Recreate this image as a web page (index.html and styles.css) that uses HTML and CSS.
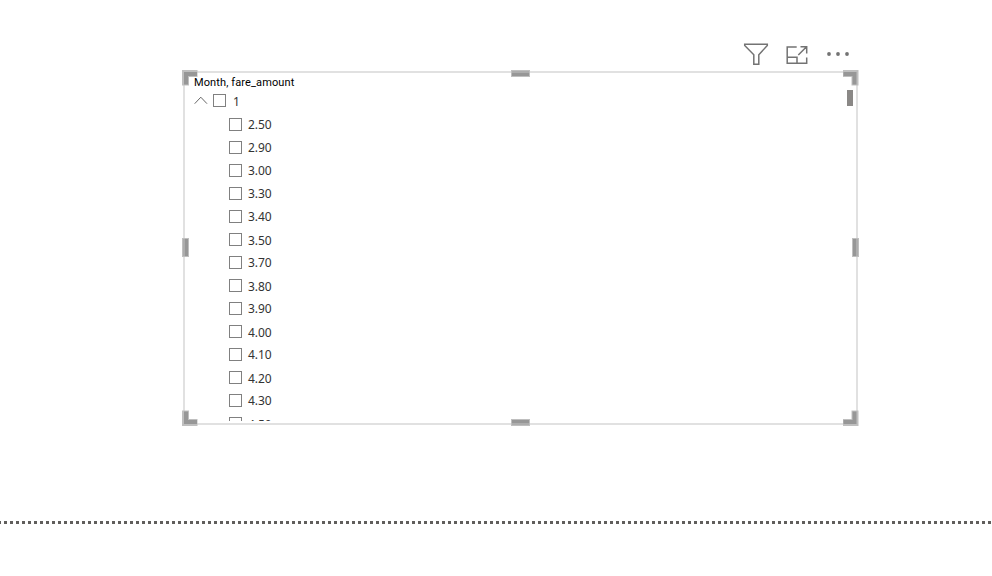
FILE: index.html
```html
<!DOCTYPE html>
<html lang="en">
<head>
<meta charset="utf-8">
<title>Slicer</title>
<link rel="stylesheet" href="styles.css">
</head>
<body>
<div class="toolbar">
  <svg width="26" height="24" viewBox="0 0 26 24"><path d="M1.7 2.2H24.3V3.5L15.8 12.7V22.2H10.8V12.7L1.7 3.5Z"/></svg>
  <svg width="24" height="24" viewBox="0 0 24 24"><path d="M11.7 5H2.2V21.3H21.7V15.5M2.2 15.3H12V21.3M13.3 13L21.3 5M15.5 4.8H21.7V11.5"/></svg>
  <svg class="more" width="24" height="24" viewBox="0 0 24 24"><circle cx="3" cy="12" r="1.9"/><circle cx="12" cy="12" r="1.9"/><circle cx="21" cy="12" r="1.9"/></svg>
</div>
<main class="slicer">
  <div class="content">
    <h1 class="title">Month, fare_amount</h1>
    <div class="parent">
      <svg class="chevron" width="14" height="9" viewBox="0 0 14 9"><path d="M0.7 7.7L6.8 1.2L13 7.7"/></svg>
      <span class="box"></span><span class="label">1</span>
    </div>
    <ul class="items">
      <li><span class="box"></span><span class="label">2.50</span></li>
      <li><span class="box"></span><span class="label">2.90</span></li>
      <li><span class="box"></span><span class="label">3.00</span></li>
      <li><span class="box"></span><span class="label">3.30</span></li>
      <li><span class="box"></span><span class="label">3.40</span></li>
      <li class="low"><span class="box"></span><span class="label">3.50</span></li>
      <li><span class="box"></span><span class="label">3.70</span></li>
      <li class="low"><span class="box"></span><span class="label">3.80</span></li>
      <li><span class="box"></span><span class="label">3.90</span></li>
      <li class="low"><span class="box"></span><span class="label">4.00</span></li>
      <li><span class="box"></span><span class="label">4.10</span></li>
      <li class="low"><span class="box"></span><span class="label">4.20</span></li>
      <li><span class="box"></span><span class="label">4.30</span></li>
      <li class="low"><span class="box"></span><span class="label">4.50</span></li>
    </ul>
  </div>
  <div class="thumb"></div>
  <svg class="handles" width="677" height="356" viewBox="0 0 677 356">
    <defs>
      <g id="corner"><path class="light" d="M0 0H15.5V7H7V15.5H0Z"/><path class="dark" d="M2 2H15V6H6V14.5H2Z"/></g>
      <g id="bar"><path class="light" d="M0 0H19V7H0Z"/><path class="mid" d="M1 1H18V6H1Z"/><path class="dark" d="M1 3H18V6H1Z"/></g>
    </defs>
    <use href="#corner"/>
    <use href="#corner" transform="translate(676.5 0) scale(-1 1)"/>
    <use href="#corner" transform="translate(0 356) scale(1 -1)"/>
    <use href="#corner" transform="translate(676.5 356) scale(-1 -1)"/>
    <use href="#bar" x="329"/>
    <use href="#bar" transform="translate(329 356) scale(1 -1)"/>
    <use href="#bar" transform="translate(0 187) rotate(-90)"/>
    <use href="#bar" transform="translate(677 168) rotate(90)"/>
  </svg>
</main>
<div class="page-edge"></div>
</body>
</html>
```
FILE: styles.css
```css
* { box-sizing: border-box; }
body {
  margin: 0;
  height: 576px;
  overflow: hidden;
  background: #fff;
  color: #333;
  font: 12px/16px "Noto Sans", sans-serif;
}
.toolbar {
  display: flex;
  gap: 16px;
  height: 71px;
  padding: 42px 0 0 743px;
}
.toolbar svg { fill: none; stroke: #737373; stroke-width: 1.5; }
.toolbar .more { fill: #737373; stroke: none; margin-left: 1px; }
.slicer {
  position: relative;
  width: 675px;
  height: 354px;
  margin-left: 183px;
  border: 2px solid #e1e1e1;
}
.content { height: 348px; overflow: hidden; padding-left: 9px; }
.title {
  margin: 0;
  padding-top: 3px;
  height: 18px;
  font: 400 11px/14px "Roboto", sans-serif;
  letter-spacing: 0.11px;
  color: #000;
}
.parent { display: flex; align-items: center; height: 19px; }
.chevron { fill: none; stroke: #666; stroke-width: 1; }
.box {
  flex: none;
  width: 13px;
  height: 13px;
  border: 1px solid #808080;
  background: #fff;
}
.parent .box { margin-left: 5px; }
.label { margin-left: 6px; letter-spacing: -0.1px; }
.parent .label { padding-top: 2px; margin-left: 7px; }
.items { margin: 0; padding: 3px 0 0 35px; list-style: none; }
.items li { display: flex; align-items: center; height: 23px; }
.low .label { padding-top: 2px; }
.thumb {
  position: absolute;
  top: 17px;
  right: 3px;
  width: 6px;
  height: 16px;
  background: #8a8886;
}
.handles { position: absolute; left: -3px; top: -3px; }
.light { fill: #bfbfbf; }
.mid { fill: #adadad; }
.dark { fill: #979797; }
.page-edge {
  height: 3px;
  margin-top: 96px;
  background: linear-gradient(90deg, #605e5c 50%, transparent 50%) -2px 0 / 6px 3px;
}
```
